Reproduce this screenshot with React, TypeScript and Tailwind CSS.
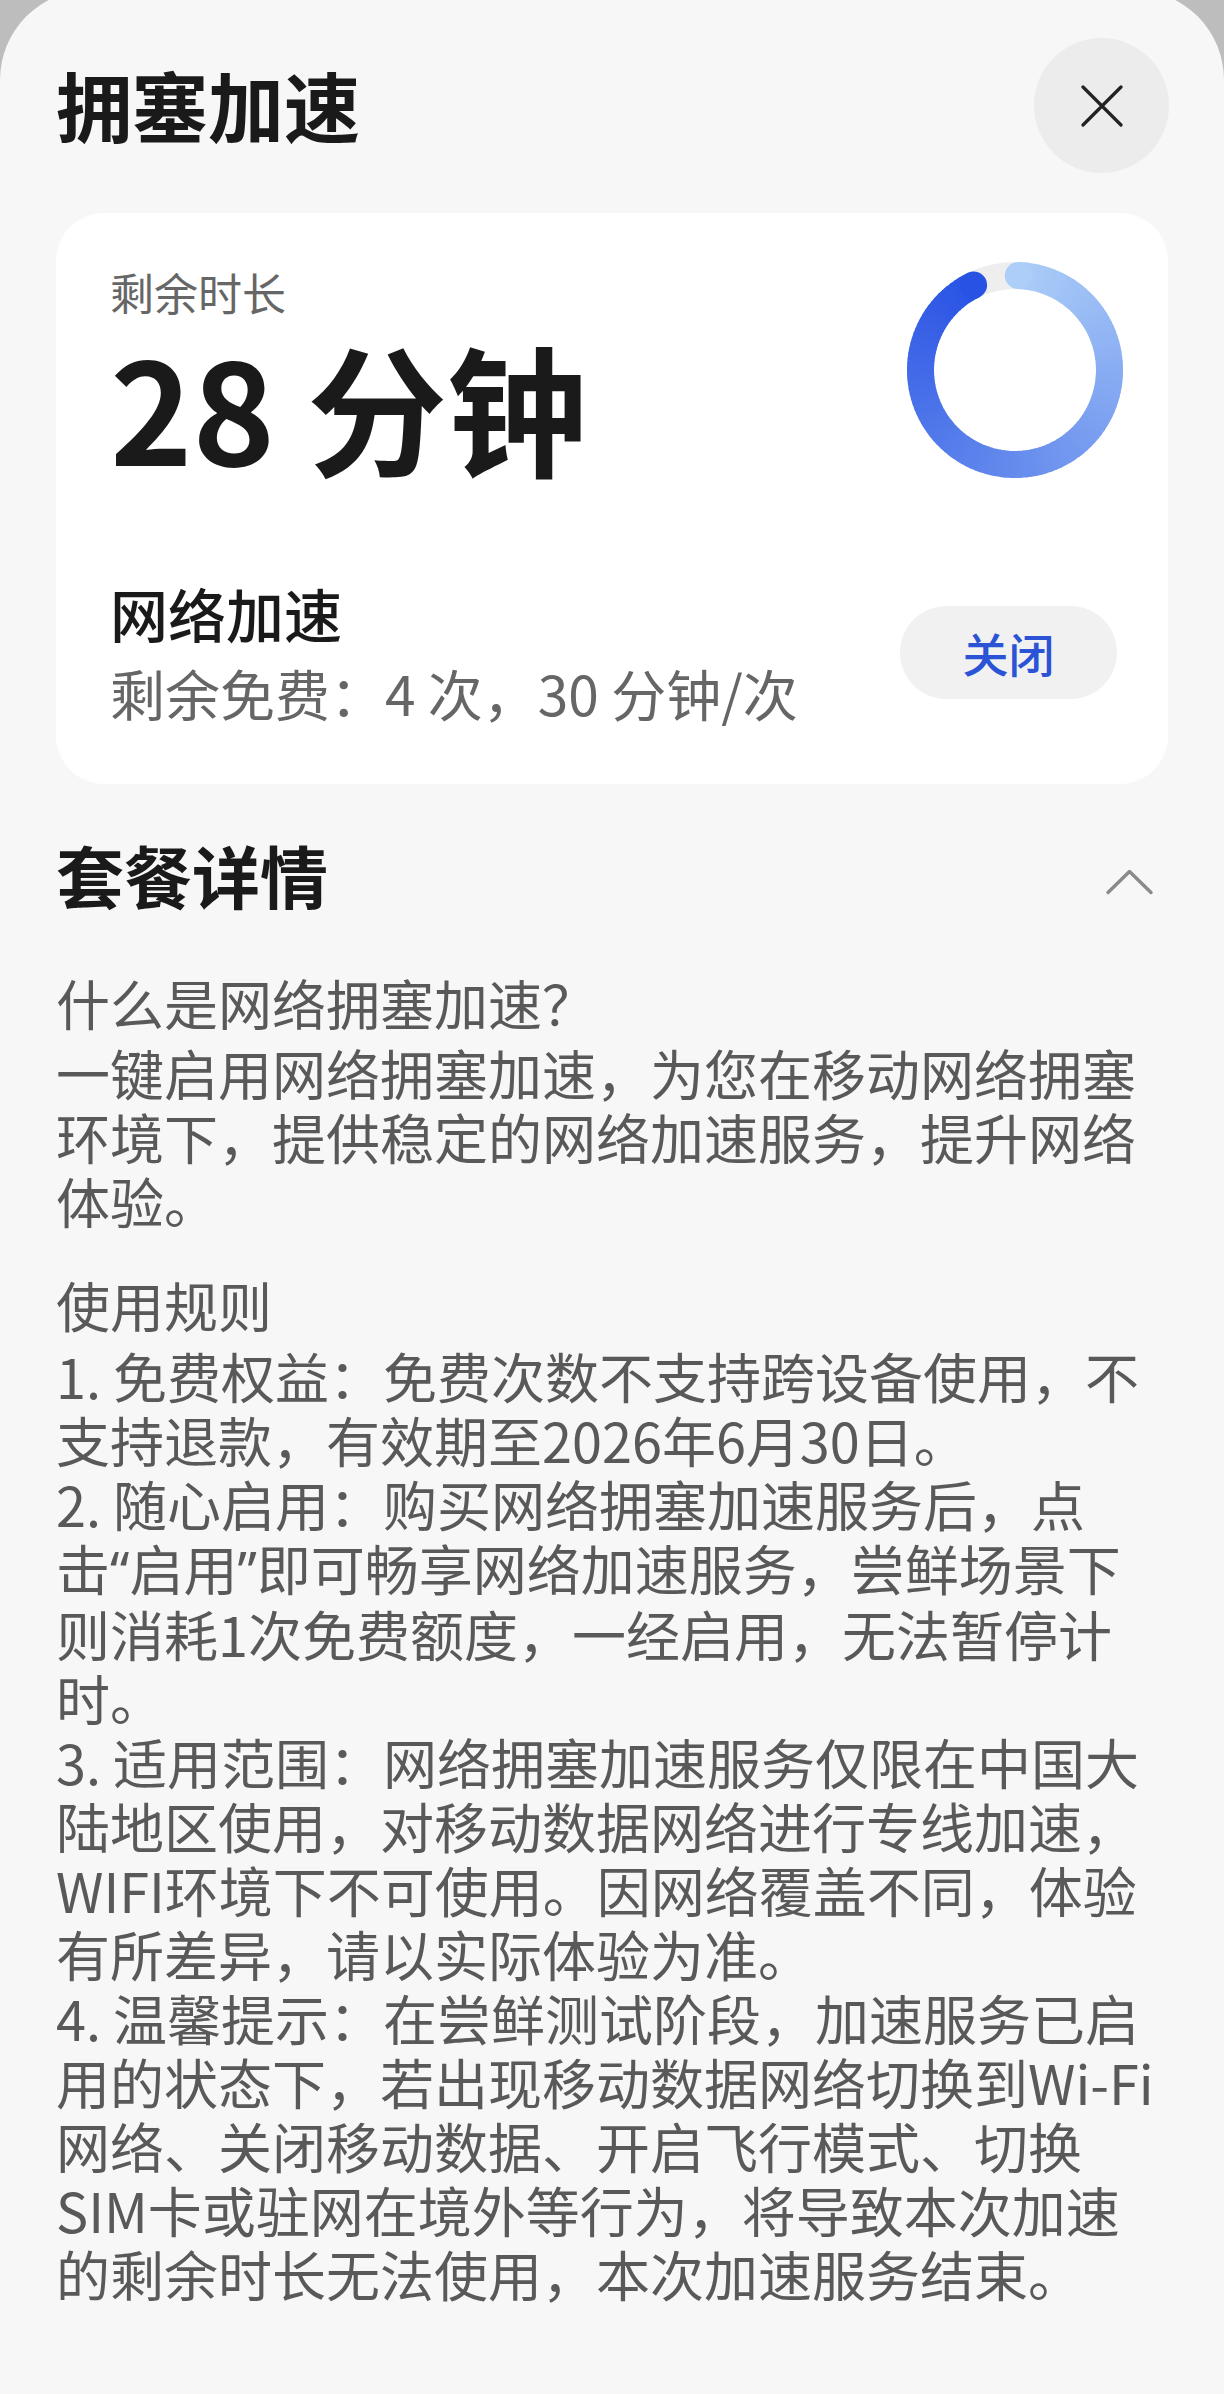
import React from "react"

const FONT = "font-['Noto_Sans_CJK_SC','Noto_Sans_CJK_JP',sans-serif]"

function CloseIcon() {
  return (
    <svg width="42" height="42" viewBox="0 0 42 42" fill="none">
      <path d="M2 2L40 40M40 2L2 40" stroke="#222" strokeWidth="3.2" strokeLinecap="round" />
    </svg>
  )
}

function ChevronUp() {
  return (
    <svg width="49" height="26" viewBox="0 0 49 26" fill="none">
      <polyline points="3,23.5 24.5,2.5 46,23.5" stroke="#8a8a8a" strokeWidth="3.4" strokeLinecap="round" strokeLinejoin="round" />
    </svg>
  )
}

// progress ring: 28 of 30 minutes left, light blue at the start → deep blue at the end
function Ring() {
  const c = 108
  const r = 94.5
  const sw = 27
  const a0 = 2
  const a1 = 334
  const n = 120
  const from = [172, 206, 248]
  const to = [40, 82, 228]
  const pt = (deg: number) => {
    const t = (deg * Math.PI) / 180
    return [c + r * Math.sin(t), c - r * Math.cos(t)]
  }
  const col = (t: number) =>
    `rgb(${from.map((v, i) => Math.round(v + (to[i] - v) * t)).join(",")})`
  const segs = []
  for (let i = 0; i < n; i++) {
    const s = a0 + ((a1 - a0) * i) / n
    const e = Math.min(a1, a0 + ((a1 - a0) * (i + 1)) / n + 0.6)
    const [x1, y1] = pt(s)
    const [x2, y2] = pt(e)
    segs.push(
      <path
        key={i}
        d={`M${x1} ${y1}A${r} ${r} 0 0 1 ${x2} ${y2}`}
        stroke={col((i + 0.5) / n)}
        strokeWidth={sw}
        fill="none"
      />
    )
  }
  const [sx, sy] = pt(a0)
  const [ex, ey] = pt(a1)
  return (
    <svg width="216" height="216" viewBox="0 0 216 216" className="shrink-0">
      <circle cx={c} cy={c} r={r} stroke="#eeeeee" strokeWidth={sw} fill="none" />
      {segs}
      <circle cx={sx} cy={sy} r={sw / 2} fill={col(0)} />
      <circle cx={ex} cy={ey} r={sw / 2} fill={col(1)} />
    </svg>
  )
}

const Q = ({ children }: { children: React.ReactNode }) => (
  <span className="font-['Noto_Sans',sans-serif]">{children}</span>
)

const intro: React.ReactNode[] = [
  "一键启用网络拥塞加速，为您在移动网络拥塞",
  "环境下，提供稳定的网络加速服务，提升网络",
  "体验。",
]

const rules: React.ReactNode[] = [
  "1. 免费权益：免费次数不支持跨设备使用，不",
  "支持退款，有效期至2026年6月30日。",
  "2. 随心启用：购买网络拥塞加速服务后，点",
  <>击<Q>“</Q>启用<Q>”</Q>即可畅享网络加速服务，尝鲜场景下</>,
  "则消耗1次免费额度，一经启用，无法暂停计",
  "时。",
  "3. 适用范围：网络拥塞加速服务仅限在中国大",
  "陆地区使用，对移动数据网络进行专线加速，",
  "WIFI环境下不可使用。因网络覆盖不同，体验",
  "有所差异，请以实际体验为准。",
  "4. 温馨提示：在尝鲜测试阶段，加速服务已启",
  "用的状态下，若出现移动数据网络切换到Wi-Fi",
  "网络、关闭移动数据、开启飞行模式、切换",
  "SIM卡或驻网在境外等行为，将导致本次加速",
  "的剩余时长无法使用，本次加速服务结束。",
]

export default function App() {
  return (
    <div className={`w-[1224px] min-h-[2394px] overflow-hidden bg-[#bdbdbd] ${FONT}`}>
      <div className="-mt-[10px] min-h-[2404px] rounded-t-[90px] bg-[#f7f7f7] pt-[48px]">
        {/* header */}
        <div className="flex items-center justify-between pl-[56px] pr-[55px]">
          <h1 className="mb-[4px] text-[76px] font-bold leading-none text-[#1a1a1a]">拥塞加速</h1>
          <button className="flex h-[135px] w-[135px] items-center justify-center rounded-full bg-[#ececec]">
            <CloseIcon />
          </button>
        </div>

        {/* status card */}
        <div className="mx-[56px] mt-[40px] rounded-[48px] bg-white pb-[64px] pl-[54px] pr-[45px] pt-[49px]">
          <div className="flex items-start justify-between">
            <div className="pt-[8px]">
              <div className="text-[44px] leading-none text-[#666]">剩余时长</div>
              <div className="mt-[21px] text-[140px] font-bold leading-none text-[#1a1a1a]">28 分钟</div>
            </div>
            <Ring />
          </div>
          <div className="mt-[106px] flex items-center justify-between">
            <div>
              <div className="text-[58px] font-medium leading-none text-[#1a1a1a]">网络加速</div>
              <div className="mt-[23px] text-[55px] leading-none text-[#666]">剩余免费：4 次，30 分钟/次</div>
            </div>
            <button className="mr-[6px] h-[93px] w-[217px] rounded-full bg-[#f1f1f1] text-[46px] font-medium leading-none text-[#2a53d6]">
              关闭
            </button>
          </div>
        </div>

        {/* package details */}
        <div className="mt-[57px] flex items-start justify-between pl-[56px] pr-[70px]">
          <h2 className="text-[68px] font-bold leading-none text-[#1a1a1a]">套餐详情</h2>
          <div className="mt-[28px]">
            <ChevronUp />
          </div>
        </div>

        <div className="mt-[62px] px-[56px] text-[54px] leading-[64px] text-[#595959]">
          <div className="mb-[6px] whitespace-nowrap">什么是网络拥塞加速？</div>
          {intro.map((l, i) => (
            <div key={i} className="whitespace-nowrap">{l}</div>
          ))}
          <div className="mb-[7px] mt-[40px] whitespace-nowrap">使用规则</div>
          {rules.map((l, i) => (
            <div key={i} className="whitespace-nowrap">{l}</div>
          ))}
        </div>
      </div>
    </div>
  )
}
